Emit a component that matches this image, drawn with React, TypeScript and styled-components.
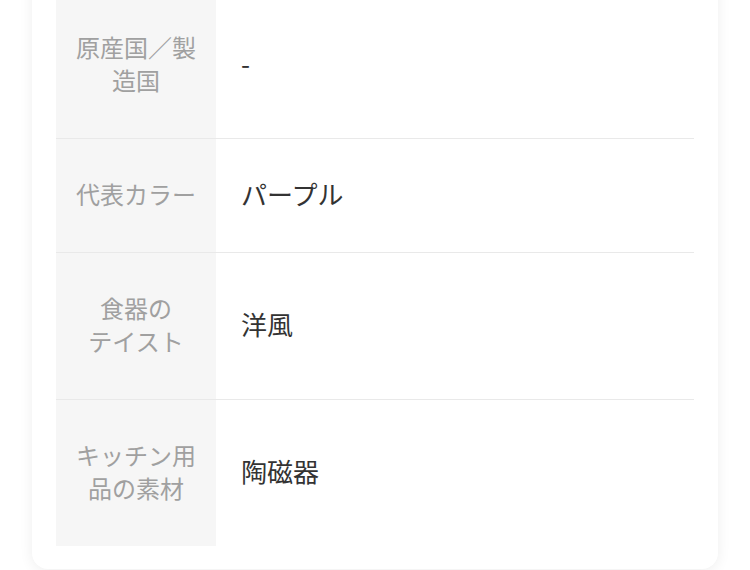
import styled, { createGlobalStyle } from 'styled-components';

const GlobalStyle = createGlobalStyle`
  html, body {
    margin: 0;
    padding: 0;
    background: #ffffff;
    overflow: hidden;
  }
  body {
    font-family: "Noto Sans CJK JP", "Noto Sans", sans-serif;
  }
`

const Page = styled.div`
  padding: 0 32px 1px;
`

const Card = styled.div`
  margin-top: -32px;
  padding: 24px 24px 23px;
  background: #ffffff;
  border-radius: 16px;
  box-shadow: 0 2px 14px rgba(0, 0, 0, 0.07);
`

const SpecTable = styled.div`
  display: flex;
  flex-direction: column;
`

const SpecRow = styled.div<{ $last?: boolean }>`
  display: grid;
  grid-template-columns: 160px 1fr;
  border-bottom: ${props => (props.$last ? 'none' : '1px solid #e9e9e9')};
`

const SpecLabel = styled.div`
  background: #f6f6f6;
  padding: 38px 14px 42px;
  font-size: 24px;
  line-height: 33px;
  color: #a0a0a0;
  text-align: center;
  word-break: break-all;
`

const SpecValue = styled.div`
  display: flex;
  align-items: center;
  padding: 0 24px 4px 25px;
  font-size: 26px;
  line-height: 34px;
  color: #333333;
`

type Spec = { label: string; value: string }

const specs: Spec[] = [
  { label: '原産国／製造国', value: '-' },
  { label: '代表カラー', value: 'パープル' },
  { label: '食器のテイスト', value: '洋風' },
  { label: 'キッチン用品の素材', value: '陶磁器' },
]

const App = () => {
  return (
    <Page>
      <GlobalStyle />
      <Card>
        <SpecTable>
          {specs.map((spec, index) => (
            <SpecRow key={spec.label} $last={index === specs.length - 1}>
              <SpecLabel>
                {spec.label === '食器のテイスト' ? (
                  <>
                    食器の
                    <br />
                    テイスト
                  </>
                ) : (
                  spec.label
                )}
              </SpecLabel>
              <SpecValue>{spec.value}</SpecValue>
            </SpecRow>
          ))}
        </SpecTable>
      </Card>
    </Page>
  )
}

export default App
